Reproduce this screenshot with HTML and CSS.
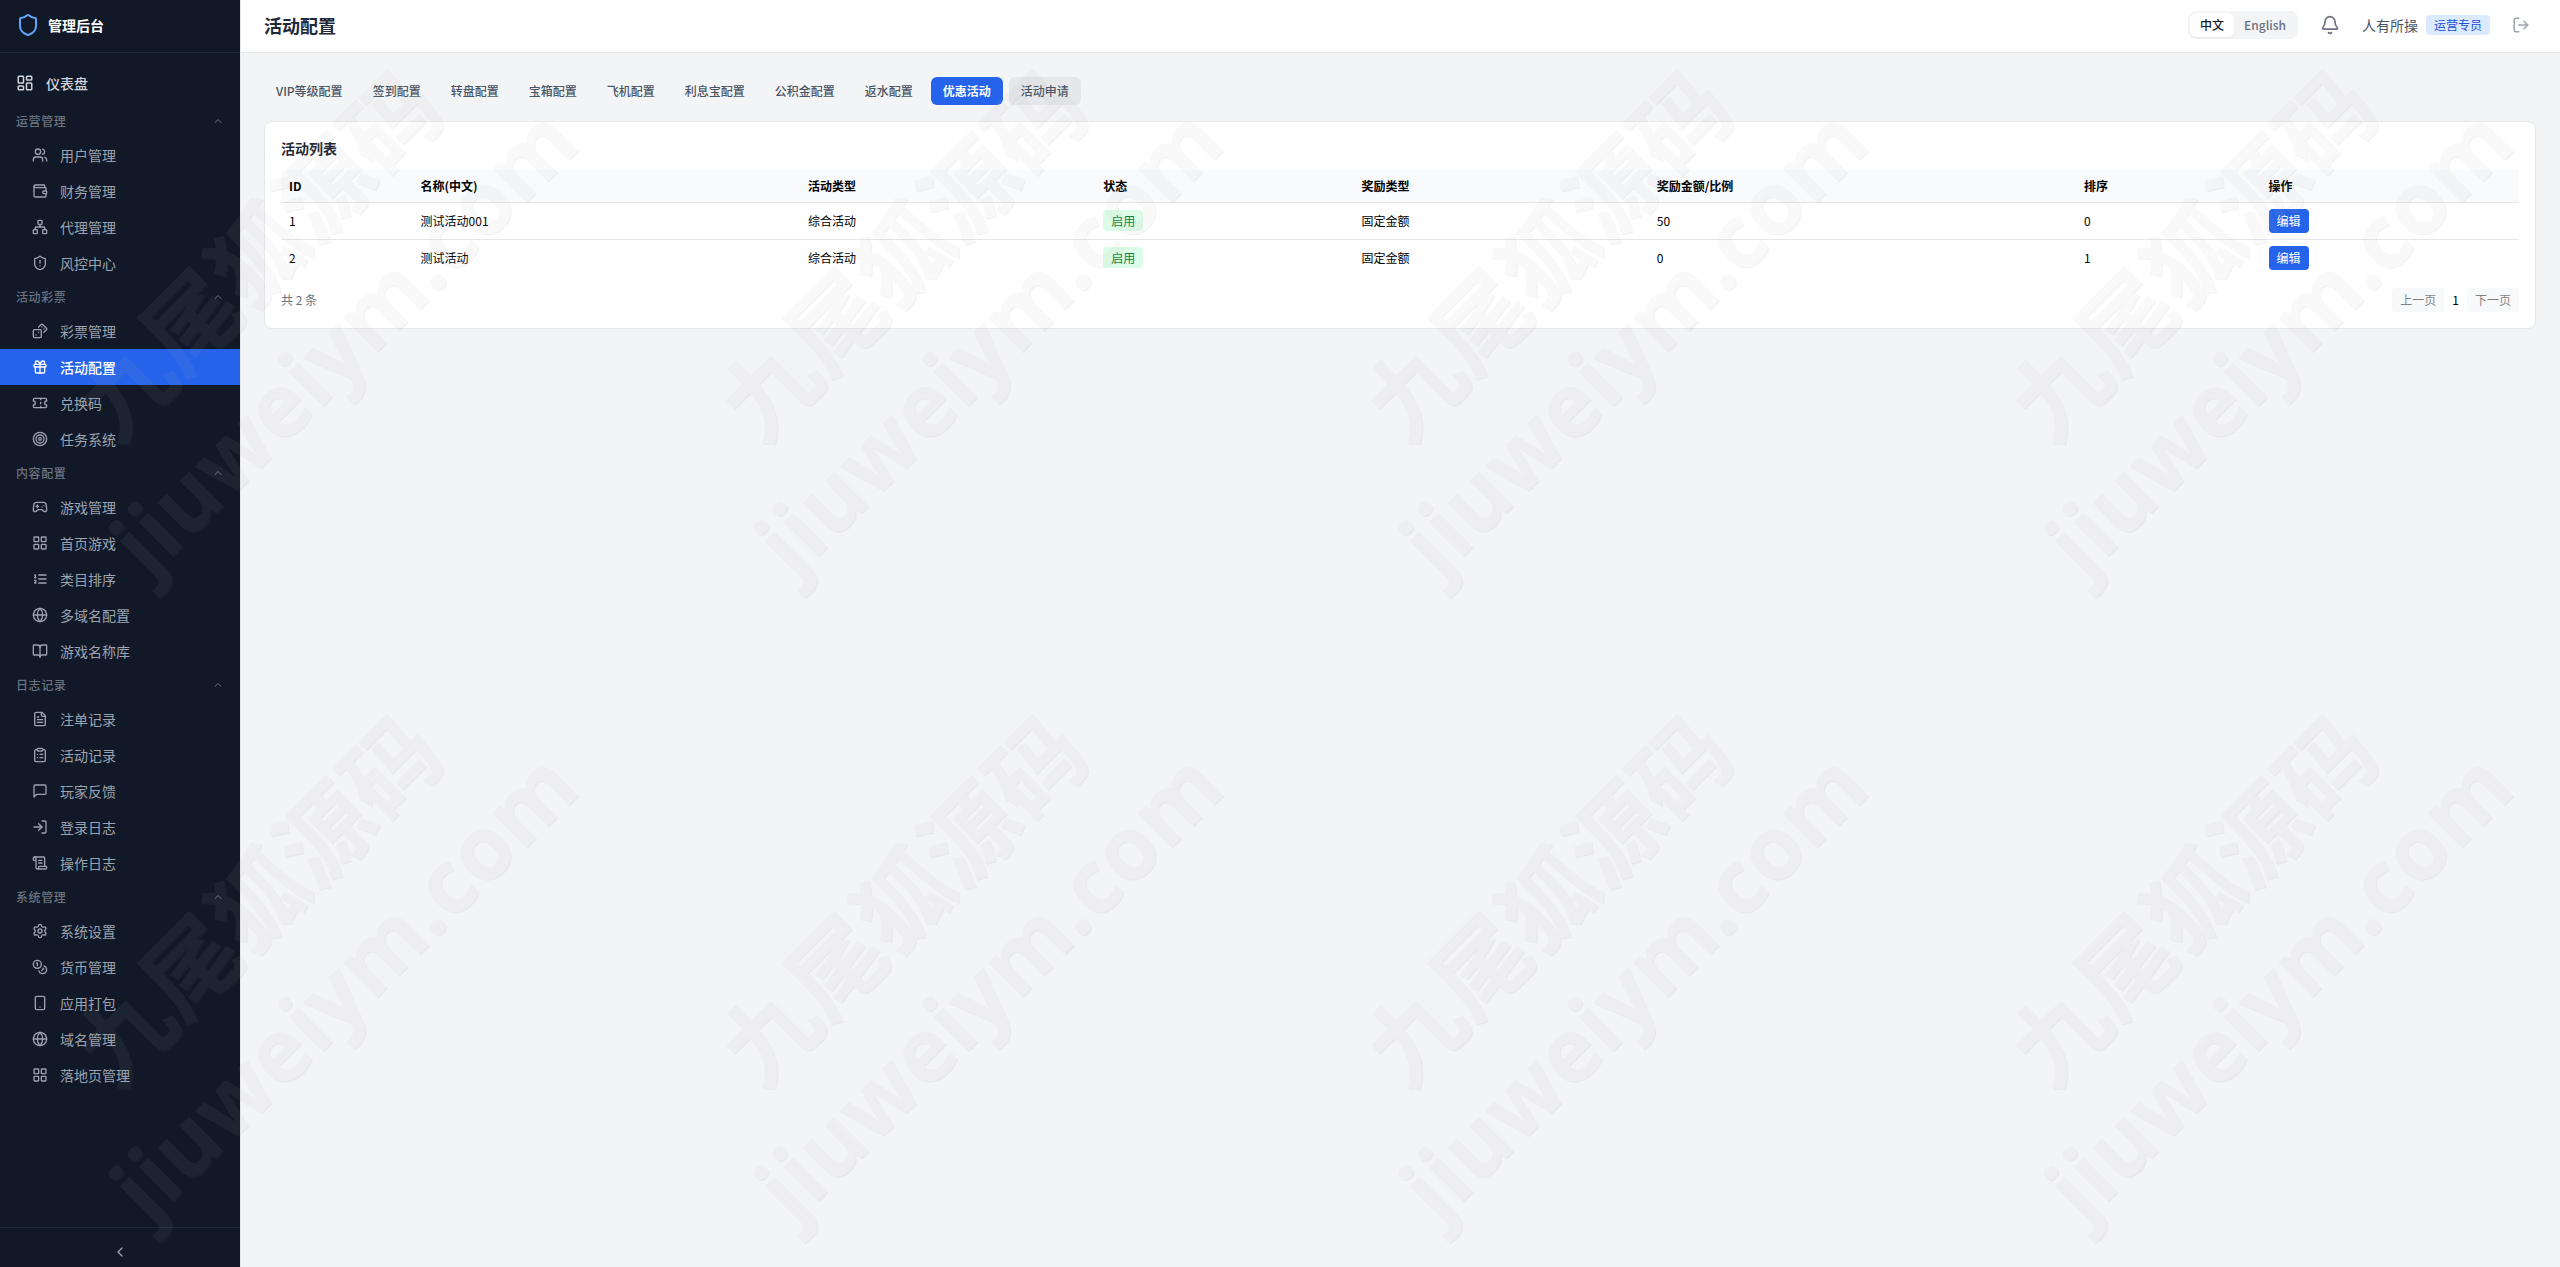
FILE: index.html
```
<!DOCTYPE html>
<html lang="zh-CN">
<head>
  <meta charset="UTF-8">
  <meta name="viewport" content="width=device-width, initial-scale=1.0">
  <title>管理后台</title>
  <link rel="stylesheet" href="styles.css">
</head>
<body>
  <div class="layout">
    <aside class="sidebar">
      <div class="brand">
        <svg class="brand-icon" viewBox="0 0 24 24"><path d="M20 13c0 5-3.5 7.5-7.66 8.95a1 1 0 0 1-.67-.01C7.5 20.5 4 18 4 13V6a1 1 0 0 1 1-1c2 0 4.5-1.2 6.24-2.72a1.17 1.17 0 0 1 1.52 0C14.51 3.81 17 5 19 5a1 1 0 0 1 1 1z"/></svg>
        <span>管理后台</span>
      </div>

      <nav class="menu">
        <a class="menu-top" href="#">
          <svg viewBox="0 0 24 24"><rect width="7" height="9" x="3" y="3" rx="1"/><rect width="7" height="5" x="14" y="3" rx="1"/><rect width="7" height="9" x="14" y="12" rx="1"/><rect width="7" height="5" x="3" y="16" rx="1"/></svg>
          仪表盘
        </a>

        <button type="button" class="menu-group">运营管理 <svg viewBox="0 0 24 24"><path d="m18 15-6-6-6 6"/></svg></button>
        <a class="menu-item" href="#">
          <svg viewBox="0 0 24 24"><path d="M16 21v-2a4 4 0 0 0-4-4H6a4 4 0 0 0-4 4v2"/><circle cx="9" cy="7" r="4"/><path d="M22 21v-2a4 4 0 0 0-3-3.87"/><path d="M16 3.13a4 4 0 0 1 0 7.75"/></svg>
          用户管理
        </a>
        <a class="menu-item" href="#">
          <svg viewBox="0 0 24 24"><path d="M19 7V4a1 1 0 0 0-1-1H5a2 2 0 0 0 0 4h15a1 1 0 0 1 1 1v4h-3a2 2 0 0 0 0 4h3a1 1 0 0 0 1-1v-2a1 1 0 0 0-1-1"/><path d="M3 5v14a2 2 0 0 0 2 2h15a1 1 0 0 0 1-1v-4"/></svg>
          财务管理
        </a>
        <a class="menu-item" href="#">
          <svg viewBox="0 0 24 24"><rect x="16" y="16" width="6" height="6" rx="1"/><rect x="2" y="16" width="6" height="6" rx="1"/><rect x="9" y="2" width="6" height="6" rx="1"/><path d="M5 16v-3a1 1 0 0 1 1-1h12a1 1 0 0 1 1 1v3"/><path d="M12 12V8"/></svg>
          代理管理
        </a>
        <a class="menu-item" href="#">
          <svg viewBox="0 0 24 24"><path d="M20 13c0 5-3.5 7.5-7.66 8.95a1 1 0 0 1-.67-.01C7.5 20.5 4 18 4 13V6a1 1 0 0 1 1-1c2 0 4.5-1.2 6.24-2.72a1.17 1.17 0 0 1 1.52 0C14.51 3.81 17 5 19 5a1 1 0 0 1 1 1z"/><path d="M12 8v4"/><path d="M12 16h.01"/></svg>
          风控中心
        </a>

        <button type="button" class="menu-group">活动彩票 <svg viewBox="0 0 24 24"><path d="m18 15-6-6-6 6"/></svg></button>
        <a class="menu-item" href="#">
          <svg viewBox="0 0 24 24"><rect width="12" height="12" x="2" y="10" rx="2"/><path d="m17.92 14 3.5-3.5a2.24 2.24 0 0 0 0-3l-5-4.92a2.24 2.24 0 0 0-3 0L10 6"/><path d="M6 18h.01"/><path d="M10 14h.01"/><path d="M15 6h.01"/><path d="M18 9h.01"/></svg>
          彩票管理
        </a>
        <a class="menu-item active" href="#">
          <svg viewBox="0 0 24 24"><rect x="3" y="8" width="18" height="4" rx="1"/><path d="M12 8v13"/><path d="M19 12v7a2 2 0 0 1-2 2H7a2 2 0 0 1-2-2v-7"/><path d="M7.5 8a2.5 2.5 0 0 1 0-5A4.8 8 0 0 1 12 8a4.8 8 0 0 1 4.5-5 2.5 2.5 0 0 1 0 5"/></svg>
          活动配置
        </a>
        <a class="menu-item" href="#">
          <svg viewBox="0 0 24 24"><path d="M2 9a3 3 0 0 1 0 6v2a2 2 0 0 0 2 2h16a2 2 0 0 0 2-2v-2a3 3 0 0 1 0-6V7a2 2 0 0 0-2-2H4a2 2 0 0 0-2 2Z"/><path d="M13 5v2"/><path d="M13 17v2"/><path d="M13 11v2"/></svg>
          兑换码
        </a>
        <a class="menu-item" href="#">
          <svg viewBox="0 0 24 24"><circle cx="12" cy="12" r="10"/><circle cx="12" cy="12" r="6"/><circle cx="12" cy="12" r="2"/></svg>
          任务系统
        </a>

        <button type="button" class="menu-group">内容配置 <svg viewBox="0 0 24 24"><path d="m18 15-6-6-6 6"/></svg></button>
        <a class="menu-item" href="#">
          <svg viewBox="0 0 24 24"><path d="M6 11h4"/><path d="M8 9v4"/><path d="M15 12h.01"/><path d="M18 10h.01"/><path d="M17.32 5H6.68a4 4 0 0 0-3.978 3.59c-.006.052-.01.101-.017.152C2.604 9.416 2 14.456 2 16a3 3 0 0 0 3 3c1 0 1.5-.5 2-1l1.414-1.414A2 2 0 0 1 9.828 16h4.344a2 2 0 0 1 1.414.586L17 18c.5.5 1 1 2 1a3 3 0 0 0 3-3c0-1.545-.604-6.584-.685-7.258-.007-.05-.011-.1-.017-.151A4 4 0 0 0 17.32 5z"/></svg>
          游戏管理
        </a>
        <a class="menu-item" href="#">
          <svg viewBox="0 0 24 24"><rect width="7" height="7" x="3" y="3" rx="1"/><rect width="7" height="7" x="14" y="3" rx="1"/><rect width="7" height="7" x="14" y="14" rx="1"/><rect width="7" height="7" x="3" y="14" rx="1"/></svg>
          首页游戏
        </a>
        <a class="menu-item" href="#">
          <svg viewBox="0 0 24 24"><path d="M10 12h11"/><path d="M10 18h11"/><path d="M10 6h11"/><path d="M4 10h2"/><path d="M4 6h1v4"/><path d="M6 18H4c0-1 2-2 2-3s-1-1.500-2-1"/></svg>
          类目排序
        </a>
        <a class="menu-item" href="#">
          <svg viewBox="0 0 24 24"><circle cx="12" cy="12" r="10"/><path d="M12 2a14.500 14.500 0 0 0 0 20 14.500 14.500 0 0 0 0-20"/><path d="M2 12h20"/></svg>
          多域名配置
        </a>
        <a class="menu-item" href="#">
          <svg viewBox="0 0 24 24"><path d="M12 7v14"/><path d="M3 18a1 1 0 0 1-1-1V4a1 1 0 0 1 1-1h5a4 4 0 0 1 4 4 4 4 0 0 1 4-4h5a1 1 0 0 1 1 1v13a1 1 0 0 1-1 1h-6a3 3 0 0 0-3 3 3 3 0 0 0-3-3z"/></svg>
          游戏名称库
        </a>

        <button type="button" class="menu-group">日志记录 <svg viewBox="0 0 24 24"><path d="m18 15-6-6-6 6"/></svg></button>
        <a class="menu-item" href="#">
          <svg viewBox="0 0 24 24"><path d="M15 2H6a2 2 0 0 0-2 2v16a2 2 0 0 0 2 2h12a2 2 0 0 0 2-2V7Z"/><path d="M14 2v4a2 2 0 0 0 2 2h4"/><path d="M10 9H8"/><path d="M16 13H8"/><path d="M16 17H8"/></svg>
          注单记录
        </a>
        <a class="menu-item" href="#">
          <svg viewBox="0 0 24 24"><rect width="8" height="4" x="8" y="2" rx="1"/><path d="M16 4h2a2 2 0 0 1 2 2v14a2 2 0 0 1-2 2H6a2 2 0 0 1-2-2V6a2 2 0 0 1 2-2h2"/><path d="M12 11h4"/><path d="M12 16h4"/><path d="M8 11h.01"/><path d="M8 16h.01"/></svg>
          活动记录
        </a>
        <a class="menu-item" href="#">
          <svg viewBox="0 0 24 24"><path d="M21 15a2 2 0 0 1-2 2H7l-4 4V5a2 2 0 0 1 2-2h14a2 2 0 0 1 2 2z"/></svg>
          玩家反馈
        </a>
        <a class="menu-item" href="#">
          <svg viewBox="0 0 24 24"><path d="m10 17 5-5-5-5"/><path d="M15 12H3"/><path d="M15 3h4a2 2 0 0 1 2 2v14a2 2 0 0 1-2 2h-4"/></svg>
          登录日志
        </a>
        <a class="menu-item" href="#">
          <svg viewBox="0 0 24 24"><path d="M15 12h-5"/><path d="M15 8h-5"/><path d="M19 17V5a2 2 0 0 0-2-2H4"/><path d="M8 21h12a2 2 0 0 0 2-2v-1a1 1 0 0 0-1-1H11a1 1 0 0 0-1 1v1a2 2 0 1 1-4 0V5a2 2 0 1 0-4 0v2a1 1 0 0 0 1 1h3"/></svg>
          操作日志
        </a>

        <button type="button" class="menu-group">系统管理 <svg viewBox="0 0 24 24"><path d="m18 15-6-6-6 6"/></svg></button>
        <a class="menu-item" href="#">
          <svg viewBox="0 0 24 24"><path d="M9.671 4.136a2.34 2.34 0 0 1 4.659 0 2.34 2.34 0 0 0 3.319 1.915 2.34 2.34 0 0 1 2.33 4.033 2.34 2.34 0 0 0 0 3.831 2.34 2.34 0 0 1-2.33 4.033 2.34 2.34 0 0 0-3.319 1.915 2.34 2.34 0 0 1-4.659 0 2.34 2.34 0 0 0-3.32-1.915 2.34 2.34 0 0 1-2.33-4.033 2.34 2.34 0 0 0 0-3.831A2.34 2.34 0 0 1 6.35 6.051a2.34 2.34 0 0 0 3.319-1.915"/><circle cx="12" cy="12" r="3"/></svg>
          系统设置
        </a>
        <a class="menu-item" href="#">
          <svg viewBox="0 0 24 24"><circle cx="8" cy="8" r="6"/><path d="M18.090 10.370A6 6 0 1 1 10.340 18"/><path d="M7 6h1v4"/><path d="m16.710 13.880.7.710-2.820 2.820"/></svg>
          货币管理
        </a>
        <a class="menu-item" href="#">
          <svg viewBox="0 0 24 24"><rect width="14" height="20" x="5" y="2" rx="2"/><path d="M12 18h.01"/></svg>
          应用打包
        </a>
        <a class="menu-item" href="#">
          <svg viewBox="0 0 24 24"><circle cx="12" cy="12" r="10"/><path d="M12 2a14.500 14.500 0 0 0 0 20 14.500 14.500 0 0 0 0-20"/><path d="M2 12h20"/></svg>
          域名管理
        </a>
        <a class="menu-item" href="#">
          <svg viewBox="0 0 24 24"><rect width="7" height="7" x="3" y="3" rx="1"/><rect width="7" height="7" x="14" y="3" rx="1"/><rect width="7" height="7" x="14" y="14" rx="1"/><rect width="7" height="7" x="3" y="14" rx="1"/></svg>
          落地页管理
        </a>
      </nav>

      <button type="button" class="collapse" aria-label="收起菜单"><svg viewBox="0 0 24 24"><path d="m15 18-6-6 6-6"/></svg></button>
    </aside>

    <div class="main">
      <header class="header">
        <h1>活动配置</h1>
        <div class="header-right">
          <div class="lang">
            <button type="button" class="lang-btn active">中文</button>
            <button type="button" class="lang-btn">English</button>
          </div>
          <button type="button" class="icon-btn bell" aria-label="通知"><svg viewBox="0 0 24 24"><path d="M10.268 21a2 2 0 0 0 3.464 0"/><path d="M3.262 15.326A1 1 0 0 0 4 17h16a1 1 0 0 0 .740-1.673C19.410 13.956 18 12.499 18 8A6 6 0 0 0 6 8c0 4.499-1.411 5.956-2.738 7.326"/></svg></button>
          <div class="user">
            <span>人有所操</span>
            <span class="role">运营专员</span>
          </div>
          <button type="button" class="icon-btn logout" aria-label="退出"><svg viewBox="0 0 24 24"><path d="m16 17 5-5-5-5"/><path d="M21 12H9"/><path d="M9 21H5a2 2 0 0 1-2-2V5a2 2 0 0 1 2-2h4"/></svg></button>
        </div>
      </header>

      <main class="content">
        <div class="tabs">
          <button type="button" class="tab">VIP等级配置</button>
          <button type="button" class="tab">签到配置</button>
          <button type="button" class="tab">转盘配置</button>
          <button type="button" class="tab">宝箱配置</button>
          <button type="button" class="tab">飞机配置</button>
          <button type="button" class="tab">利息宝配置</button>
          <button type="button" class="tab">公积金配置</button>
          <button type="button" class="tab">返水配置</button>
          <button type="button" class="tab active">优惠活动</button>
          <button type="button" class="tab hovered">活动申请</button>
        </div>

        <section class="card">
          <h2>活动列表</h2>
          <table>
            <thead>
              <tr>
                <th>ID</th>
                <th>名称(中文)</th>
                <th>活动类型</th>
                <th>状态</th>
                <th>奖励类型</th>
                <th>奖励金额/比例</th>
                <th>排序</th>
                <th>操作</th>
              </tr>
            </thead>
            <tbody>
              <tr>
                <td>1</td>
                <td>测试活动001</td>
                <td>综合活动</td>
                <td><span class="status">启用</span></td>
                <td>固定金额</td>
                <td>50</td>
                <td>0</td>
                <td><button type="button" class="edit">编辑</button></td>
              </tr>
              <tr>
                <td>2</td>
                <td>测试活动</td>
                <td>综合活动</td>
                <td><span class="status">启用</span></td>
                <td>固定金额</td>
                <td>0</td>
                <td>1</td>
                <td><button type="button" class="edit">编辑</button></td>
              </tr>
            </tbody>
          </table>
          <div class="table-footer">
            <span class="total">共 2 条</span>
            <div class="pager">
              <button type="button" disabled>上一页</button>
              <span>1</span>
              <button type="button" disabled>下一页</button>
            </div>
          </div>
        </section>
      </main>
    </div>
  </div>

  <!-- watermark over the whole page -->
  <svg class="watermark" aria-hidden="true">
    <defs>
      <pattern id="mark" x="4" y="0" width="645" height="645" patternUnits="userSpaceOnUse">
        <g transform="translate(323 324) rotate(-45)">
          <g class="mark-shade" transform="translate(0 2)">
            <text class="mark-name" y="-63">九尾狐源码</text>
            <text class="mark-site" y="55">jiuweiym.com</text>
          </g>
          <text class="mark-name" y="-63">九尾狐源码</text>
          <text class="mark-site" y="55">jiuweiym.com</text>
        </g>
      </pattern>
    </defs>
    <rect width="100%" height="100%" fill="url(#mark)"/>
  </svg>
</body>
</html>
```
FILE: styles.css
```
* {
  box-sizing: border-box;
}
body {
  margin: 0;
  font-family: "Noto Sans CJK SC", sans-serif;
  font-size: 14px;
  line-height: 20px;
  color: #000;
  background-color: #f3f4f6;
}
button {
  font-family: inherit;
  border: none;
  padding: 0;
  background: none;
  cursor: pointer;
}
svg {
  fill: none;
  stroke: currentColor;
  stroke-width: 2;
  stroke-linecap: round;
  stroke-linejoin: round;
  flex-shrink: 0;
}
h1, h2 {
  margin: 0;
  font-weight: 600;
  color: #1f2937;
}
.layout {
  display: flex;
  min-height: 100vh;
}

/* sidebar */
.sidebar {
  position: relative;
  width: 240px;
  flex-shrink: 0;
  display: flex;
  flex-direction: column;
  background-color: #111827;
  box-shadow: 1px 0 0 #e5e7eb;
}
.brand {
  display: flex;
  align-items: center;
  gap: 8px;
  padding: 13px 16px 15px;
  border-bottom: 1px solid #1f2937;
  color: #fff;
  font-weight: 700;
}
.brand-icon {
  width: 24px;
  height: 24px;
  color: #60a5fa;
}
.menu {
  flex: 1;
  padding: 12px 0;
}
.menu-top, .menu-item {
  display: flex;
  align-items: center;
  gap: 12px;
  padding: 8px 16px;
  color: #9ca3af;
  text-decoration: none;
}
.menu-top {
  margin-bottom: 4px;
  color: #d1d5db;
  font-weight: 500;
}
.menu-top svg {
  width: 18px;
  height: 18px;
}
.menu-item {
  padding-left: 32px;
}
.menu-item svg {
  width: 16px;
  height: 16px;
}
.menu-item.active {
  background-color: #2563eb;
  color: #fff;
  font-weight: 500;
}
.menu-group {
  display: flex;
  align-items: center;
  justify-content: space-between;
  width: 100%;
  padding: 8px 16px;
  color: #6b7280;
  font-size: 12px;
  line-height: 16px;
  font-weight: 500;
  letter-spacing: 0.05em;
}
.menu-group svg {
  width: 12px;
  height: 12px;
}
.collapse {
  display: flex;
  justify-content: center;
  padding: 16px 0 7px;
  border-top: 1px solid #1f2937;
  color: #9ca3af;
}
.collapse svg {
  width: 16px;
  height: 16px;
}

/* header */
.main {
  flex: 1;
  min-width: 0;
}
.header {
  display: flex;
  align-items: center;
  justify-content: space-between;
  padding: 9px 24px 11px;
  background-color: #fff;
  border-bottom: 1px solid #e5e7eb;
}
h1 {
  font-size: 18px;
  line-height: 28px;
}
.header-right {
  display: flex;
  align-items: center;
  gap: 16px;
}
.lang {
  display: flex;
  padding: 2px;
  border-radius: 8px;
  background-color: #f3f4f6;
}
.lang-btn {
  padding: 4px 10px;
  border-radius: 6px;
  font-size: 12px;
  line-height: 16px;
  font-weight: 500;
  color: #6b7280;
}
.lang-btn.active {
  background-color: #fff;
  color: #111827;
  box-shadow: 0 1px 2px rgba(0, 0, 0, 0.05);
}
.icon-btn {
  display: flex;
  padding: 6px;
}
.bell {
  color: #6b7280;
}
.bell svg {
  width: 20px;
  height: 20px;
}
.logout {
  color: #9ca3af;
}
.logout svg {
  width: 18px;
  height: 18px;
}
.user {
  display: flex;
  align-items: center;
  gap: 8px;
  color: #4b5563;
}
.role {
  padding: 2px 8px;
  border-radius: 4px;
  font-size: 12px;
  line-height: 16px;
  background-color: #dbeafe;
  color: #1d4ed8;
}

/* content */
.content {
  padding: 24px;
}
.tabs {
  display: flex;
  gap: 6px;
  margin-bottom: 16px;
}
.tab {
  padding: 6px 12px;
  border-radius: 6px;
  font-size: 12px;
  line-height: 16px;
  font-weight: 500;
  color: #4b5563;
}
.tab.hovered {
  background-color: #e5e7eb;
}
.tab.active {
  background-color: #2563eb;
  color: #fff;
  font-weight: 600;
}
.card {
  padding: 16px;
  background-color: #fff;
  border: 1px solid #e5e7eb;
  border-radius: 8px;
}
h2 {
  margin-bottom: 12px;
  font-size: 14px;
  line-height: 20px;
}
table {
  width: 100%;
  border-collapse: collapse;
  font-size: 12px;
  line-height: 16px;
}
th {
  padding: 8px;
  text-align: left;
  background-color: #f9fafb;
}
td {
  padding: 6px 8px;
}
tr {
  border-bottom: 1px solid #e5e7eb;
}
tbody tr:last-child {
  border-bottom: none;
}
.status {
  padding: 2px 8px;
  border-radius: 4px;
  background-color: #dcfce7;
  color: #15803d;
}
.edit {
  display: block;
  padding: 4px 8px;
  border-radius: 4px;
  font-size: 12px;
  line-height: 16px;
  background-color: #2563eb;
  color: #fff;
}
.table-footer {
  display: flex;
  align-items: center;
  justify-content: space-between;
  margin-top: 12px;
  font-size: 12px;
  line-height: 16px;
}
.total {
  color: #6b7280;
}
.pager {
  display: flex;
  align-items: center;
}
.pager span {
  padding: 0 8px;
}
.pager button {
  padding: 4px 8px;
  border-radius: 4px;
  font-size: 12px;
  line-height: 16px;
  color: #000;
  background-color: #f3f4f6;
  opacity: 0.5;
}

.watermark {
  position: fixed;
  top: 0;
  left: 0;
  width: 100%;
  height: 100%;
  pointer-events: none;
  opacity: 0.08;
}
.watermark text {
  fill: #b4b4b4;
  stroke: none;
  font-weight: 700;
  text-anchor: middle;
}
.watermark .mark-name {
  font-size: 94px;
}
.watermark .mark-site {
  font-family: "Open Sans", sans-serif;
  font-size: 88px;
}
.watermark rect {
  stroke: none;
}
.watermark .mark-shade text {
  fill: #777;
}
```
